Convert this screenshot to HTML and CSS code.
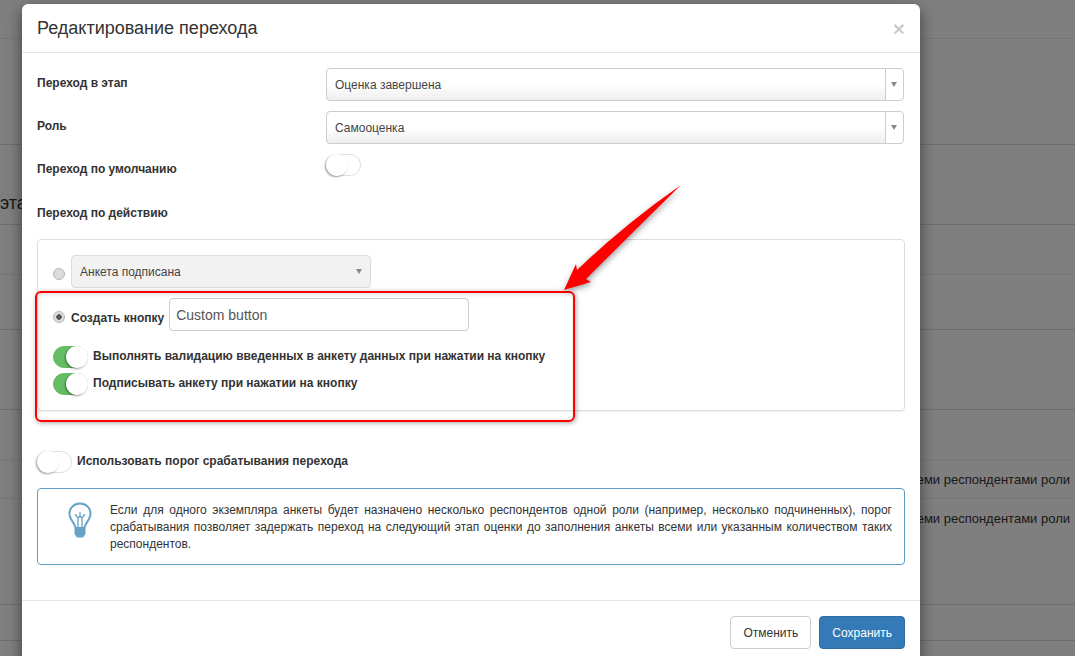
FILE: index.html
```html
<!DOCTYPE html>
<html lang="ru">
<head>
<meta charset="utf-8">
<title>Редактирование перехода</title>
<link rel="stylesheet" href="styles.css">
</head>
<body>
<div class="page">
  <div class="bg-row h39 light"></div>
  <div class="bg-row h106"></div>
  <div class="bg-row h80 bg-heading"><span>эта</span></div>
  <div class="bg-row h50 light"></div>
  <div class="bg-row h55"></div>
  <div class="bg-row h80"></div>
  <div class="bg-row h50 light"></div>
  <div class="bg-row h39 light bg-right"><span>еми респондентами роли</span></div>
  <div class="bg-row h106 bg-right"><span>еми респондентами роли</span></div>
  <div class="bg-row h36"></div>
</div>
<div class="backdrop"></div>
<section class="modal">
  <header class="modal-head">
    <h4>Редактирование перехода</h4>
    <span class="close">×</span>
  </header>
  <div class="modal-body">
    <div class="form-row">
      <label class="lbl">Переход в этап</label>
      <div class="sel"><span class="sel-text">Оценка завершена</span><span class="sel-btn"><i class="caret"></i></span></div>
    </div>
    <div class="form-row">
      <label class="lbl">Роль</label>
      <div class="sel"><span class="sel-text">Самооценка</span><span class="sel-btn"><i class="caret"></i></span></div>
    </div>
    <div class="form-row toggle-row">
      <label class="lbl">Переход по умолчанию</label>
      <span class="sw"><i class="knob"></i></span>
    </div>
    <div class="lbl action-lbl">Переход по действию</div>
    <div class="panel">
      <div class="radio-row">
        <span class="radio"></span>
        <div class="dis-sel"><span>Анкета подписана</span><i class="caret"></i></div>
      </div>
      <div class="radio-row second">
        <span class="radio on"></span>
        <span class="lbl btn-lbl">Создать кнопку</span>
        <div class="text-input">Custom button</div>
      </div>
      <div class="sw-row first"><span class="sw on"><i class="knob"></i></span><span class="lbl up">Выполнять валидацию введенных в анкету данных при нажатии на кнопку</span></div>
      <div class="sw-row"><span class="sw on"><i class="knob"></i></span><span class="lbl up">Подписывать анкету при нажатии на кнопку</span></div>
    </div>
    <div class="sw-row threshold"><span class="sw"><i class="knob"></i></span><span class="lbl up">Использовать порог срабатывания перехода</span></div>
    <div class="info">
      <svg class="bulb" viewBox="0 0 24 36" width="24" height="36" fill="none" stroke="#66a3c7" stroke-width="2" stroke-linecap="round" stroke-linejoin="round">
        <path d="M7.500 26c0-4.500-6-8-6-14.500C1.500 5.800 6.200 1.500 12 1.500s10.500 4.300 10.500 10c0 6.500-6 10-6 14.500z"/>
        <path stroke-width="1.300" d="M10 25V16L7.500 12.500M14 25V16l2.500-3.500M10 16l2-2 2 2M12 14v-3.500"/>
        <path stroke-width="0" fill="#66a3c7" d="M6.500 26.500h11v5.500l-2.500 3.500H9l-2.500-3.500z"/>
      </svg>
      <p>Если для одного экземпляра анкеты будет назначено несколько респондентов одной роли (например, несколько подчиненных), порог срабатывания позволяет задержать переход на следующий этап оценки до заполнения анкеты всеми или указанным количеством таких респондентов.</p>
    </div>
  </div>
  <footer class="modal-foot">
    <button class="btn cancel">Отменить</button>
    <button class="btn primary">Сохранить</button>
  </footer>
</section>
<div class="red-box"></div>
<svg class="arrow" viewBox="0 0 1075 656" width="1075" height="656">
  <path d="M681 185 Q632 233 586 279 L591 282 L564 290 L576 264 L577 270 Q625 224 681 185 Z" fill="#ff0000"/>
</svg>
</body>
</html>
```
FILE: styles.css
```css
* { box-sizing: border-box; }
html, body { margin: 0; height: 656px; overflow: hidden; }
body { position: relative; background: #fff; font-family: "Liberation Sans", Arial, sans-serif; font-size: 12px; color: #333; }

.page { display: flex; flex-direction: column; }
.bg-row { border-bottom: 1px solid #ddd; display: flex; }
.bg-row.light { border-bottom-color: #eee; }
.h39 { height: 39px; }
.h106 { height: 106px; }
.h80 { height: 80px; }
.h50 { height: 50px; }
.h55 { height: 55px; }
.h36 { height: 36px; }
.bg-heading { font-size: 18px; align-items: flex-end; padding-bottom: 10px; }
.bg-right { justify-content: flex-end; font-size: 13px; padding: 12px 5px 0 0; }

.backdrop { position: absolute; inset: 0; background: rgba(0,0,0,.5); }

.modal { position: absolute; left: 22px; top: 4px; width: 898px; height: 700px; background: #fff; border-radius: 6px; box-shadow: 0 5px 15px rgba(0,0,0,.5); }
.modal-head { height: 49px; border-bottom: 1px solid #e5e5e5; padding: 0 15px; display: flex; justify-content: space-between; align-items: center; }
.modal-head h4 { margin: 0; font-size: 18px; font-weight: 400; line-height: 48px; }
.close { font-size: 21px; font-weight: 700; color: #000; opacity: .2; line-height: 1; }
.modal-body { padding: 15px 15px 0; height: 547px; }

.lbl { font-weight: 700; font-size: 12px; line-height: 17px; }
.form-row { display: grid; grid-template-columns: 289px 578px; margin-bottom: 10px; }
.form-row > .lbl { padding-top: 7px; }
.toggle-row { height: 22px; margin-bottom: 0; }
.up { position: relative; top: -1px; }

.sel { height: 33px; border: 1px solid #ccc; border-radius: 4px; display: flex; background: linear-gradient(#fff 50%, #eee); }
.sel-text { flex: 1; padding: 0 8px; line-height: 32px; color: #444; }
.sel-btn { width: 18px; border-left: 1px solid #ccc; background: #fff; border-radius: 0 4px 4px 0; display: flex; align-items: center; justify-content: center; padding-right: 2px; }
.caret { width: 0; height: 0; border-left: 3.500px solid transparent; border-right: 3.500px solid transparent; border-top: 5px solid #888; }

.sw { display: block; position: relative; flex: none; width: 35px; height: 22px; border-radius: 11px; background: #fff; border: 1px solid #dfdfdf; }
.sw.on { background: #64bd63; border-color: #64bd63; }
.knob { position: absolute; left: -1px; top: -1px; width: 22px; height: 22px; border-radius: 50%; background: #fff; box-shadow: -1px 1px 2px rgba(0,0,0,.4); }
.sw.on .knob { left: 12px; }

.action-lbl { margin-top: 27px; height: 36px; padding-top: 2px; }
.panel { height: 172px; border: 1px solid #ddd; border-radius: 4px; padding: 15px 15px 0; box-shadow: 0 1px 1px rgba(0,0,0,.05); }
.radio-row { display: flex; align-items: center; }
.radio { flex: none; width: 12px; height: 12px; border-radius: 50%; background: #dcdcdc; border: 1px solid #b5b5b5; margin-right: 6px; position: relative; top: 2px; }
.radio.on { background: radial-gradient(circle, #555 0 2.500px, #dcdcdc 3px); }
.dis-sel { width: 300px; height: 33px; border: 1px solid #ddd; border-radius: 4px; background: #f2f2f2; display: flex; align-items: center; justify-content: space-between; padding: 0 8px; color: #444; }
.second { margin-top: 10px; height: 33px; }
.btn-lbl { margin-right: 5px; position: relative; top: 4px; }
.text-input { width: 300px; height: 33px; border: 1px solid #ccc; border-radius: 4px; padding: 0 6px; font-size: 14px; line-height: 32px; color: #555; }
.sw-row { display: flex; align-items: center; gap: 5px; margin-top: 5px; }
.sw-row.first { margin-top: 15px; }
.threshold { margin-top: 40px; }

.info { display: flex; margin-top: 15px; height: 77px; border: 1px solid #5b9bc4; border-radius: 4px; padding: 13px 12px 0 30px; color: #333; }
.bulb { flex: none; margin-right: 18px; }
.info p { margin: 0; font-size: 12px; line-height: 17px; text-align: justify; }

.modal-foot { border-top: 1px solid #e5e5e5; padding: 15px; display: flex; justify-content: flex-end; gap: 8px; }
.btn { height: 33px; font: 12px "Liberation Sans", Arial, sans-serif; border: 1px solid #ccc; border-radius: 4px; background: #fff; color: #333; padding: 0 12px; }
.cancel { width: 81px; padding: 0; }
.primary { background: #337ab7; border-color: #2e6da4; color: #fff; }

.red-box { position: absolute; left: 35px; top: 291px; width: 540px; height: 131px; border: 2px solid #f00; border-radius: 6px; box-shadow: 1px 1px 5px rgba(0,0,0,.35), inset 1px 1px 5px rgba(0,0,0,.15); }
.arrow { position: absolute; left: 0; top: 0; filter: drop-shadow(1px 2px 3px rgba(0,0,0,.4)); pointer-events: none; }
```
